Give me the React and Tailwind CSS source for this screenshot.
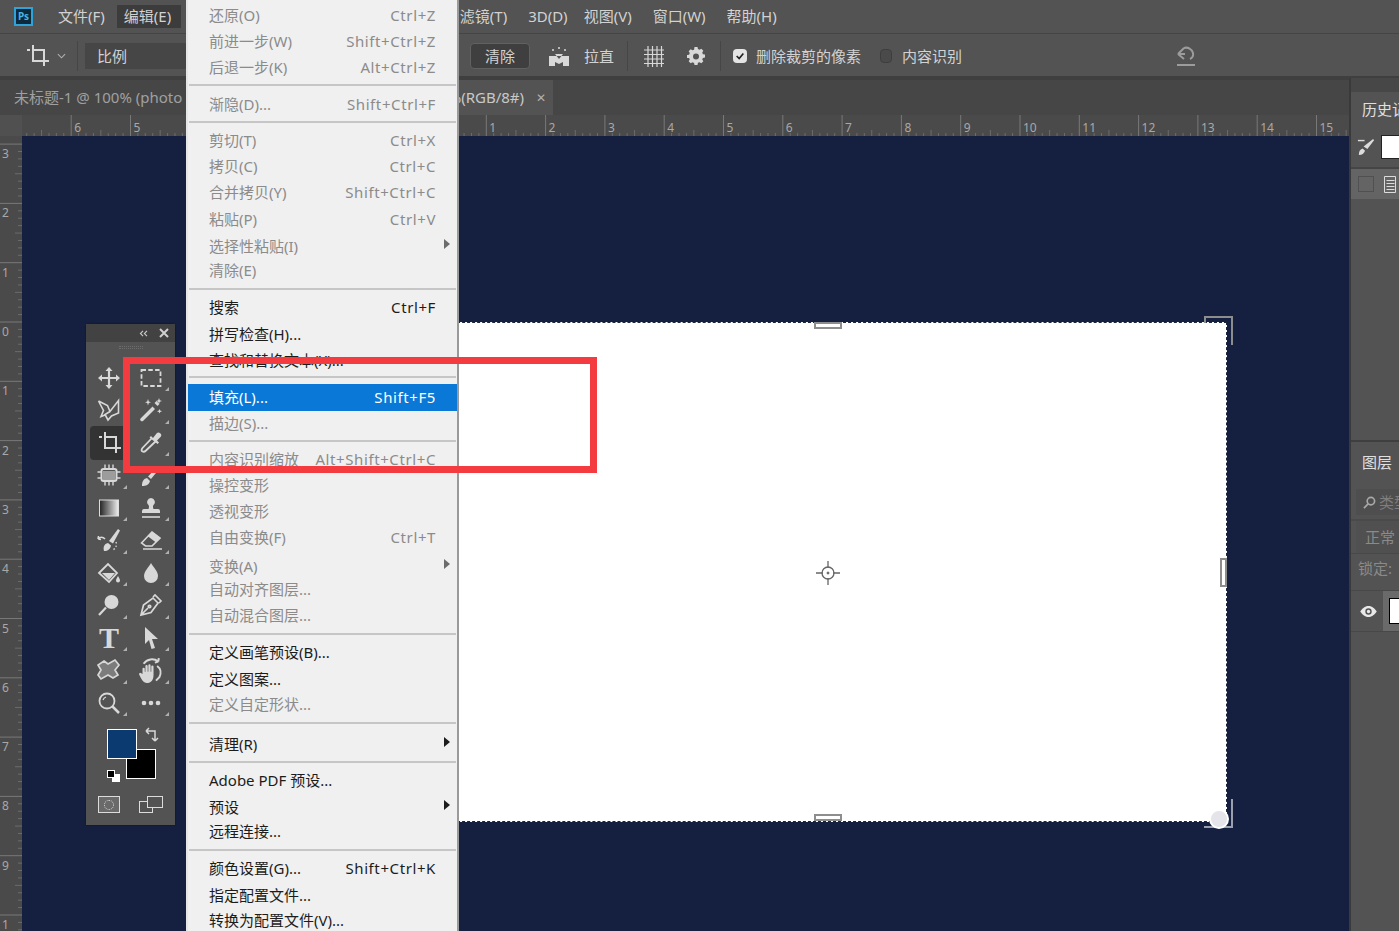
import React from 'react';

// Edit menu rows, top to bottom. Heights are set per row since the picture's spacing is uneven
const menu = [
  { label: '还原(O)', key: 'Ctrl+Z', h: 'h-[26px]', off: true },
  { label: '前进一步(W)', key: 'Shift+Ctrl+Z', h: 'h-[26px]', off: true },
  { label: '后退一步(K)', key: 'Alt+Ctrl+Z', h: 'h-[26px]', off: true },
  { sep: 'h-[10px]' },
  { label: '渐隐(D)...', key: 'Shift+Ctrl+F', h: 'h-[28px]', off: true },
  { sep: 'h-[8px]' },
  { label: '剪切(T)', key: 'Ctrl+X', h: 'h-[28px]', off: true },
  { label: '拷贝(C)', key: 'Ctrl+C', h: 'h-[25px]', off: true },
  { label: '合并拷贝(Y)', key: 'Shift+Ctrl+C', h: 'h-[26px]', off: true },
  { label: '粘贴(P)', key: 'Ctrl+V', h: 'h-[28px]', off: true },
  { label: '选择性粘贴(I)', h: 'h-[26px]', off: true, arrow: true },
  { label: '清除(E)', h: 'h-[22px]', off: true },
  { sep: 'h-[16px]' },
  { label: '搜索', key: 'Ctrl+F', h: 'h-[20px]' },
  { label: '拼写检查(H)...', h: 'h-[34px]' },
  { label: '查找和替换文本(X)...', h: 'h-[18px]' },
  { sep: 'h-[15px]' },
  { label: '填充(L)...', key: 'Shift+F5', h: 'h-[27px]', active: true },
  { label: '描边(S)...', h: 'h-[24px]', off: true },
  { sep: 'h-[12px]' },
  { label: '内容识别缩放', key: 'Alt+Shift+Ctrl+C', h: 'h-[24px]', off: true },
  { label: '操控变形', h: 'h-[28px]', off: true },
  { label: '透视变形', h: 'h-[24px]', off: true },
  { label: '自由变换(F)', key: 'Ctrl+T', h: 'h-[28px]', off: true },
  { label: '变换(A)', h: 'h-[30px]', off: true, arrow: true },
  { label: '自动对齐图层...', h: 'h-[16px]', off: true },
  { label: '自动混合图层...', h: 'h-[36px]', off: true },
  { sep: 'h-[2px]' },
  { label: '定义画笔预设(B)...', h: 'h-[34px]' },
  { label: '定义图案...', h: 'h-[20px]' },
  { label: '定义自定形状...', h: 'h-[30px]', off: true },
  { sep: 'h-[8px]' },
  { label: '清理(R)', h: 'h-[34px]', arrow: true },
  { sep: 'h-[2px]' },
  { label: 'Adobe PDF 预设...', h: 'h-[34px]' },
  { label: '预设', h: 'h-[20px]', arrow: true },
  { label: '远程连接...', h: 'h-[28px]' },
  { sep: 'h-[10px]' },
  { label: '颜色设置(G)...', key: 'Shift+Ctrl+K', h: 'h-[26px]' },
  { label: '指定配置文件...', h: 'h-[28px]' },
  { label: '转换为配置文件(V)...', h: 'h-[22px]' },
];

const Ico = ({ children, className = 'w-6 h-6' }) => (
  <svg viewBox="0 0 24 24" className={className} fill="none" stroke="#d8d8d8" strokeWidth="1.8">
    {children}
  </svg>
);

const F = { fill: '#d8d8d8', stroke: 'none' };

const tools = [
  // move
  <Ico><path {...F} d="M12 1l3.500 4h-2.400v5.900H19V8.500l4 3.500-4 3.500v-2.400h-5.900V19h2.400L12 23l-3.500-4h2.400v-5.900H5v2.400L1 12l4-3.500v2.400h5.900V5H8.500z" /></Ico>,
  // marquee
  <Ico><path strokeWidth="1.800" strokeDasharray="4.500 2.300" d="M2.500 4h19v16h-19z" /></Ico>,
  // polygonal lasso
  <Ico><path strokeWidth="1.600" d="M1.500 3l9 4.500 2.500 6 8.500-11V15l-7 3-3.500 4-3-5.500L13 13.500M1.500 3l5 9.500-2.500 6 4-1.500" /></Ico>,
  // magic wand
  <Ico><path {...F} d="M1.500 20.500l12-12 2.500 2.500-12 12a1.800 1.800 0 0 1-2.500-2.500z" /><path {...F} d="M15.500 5l2-2 3 3-2 2z" /><path {...F} d="M9 1l.8 2.400L12 4.200l-2.200.8L9 7.400 8.200 5 6 4.200l2.200-.8zM20 0l.8 2.200 2.200.8-2.200.8L20 6l-.8-2.200L17 3l2.200-.8zM20.500 11l.7 1.600 1.800.7-1.800.7-.7 1.600-.7-1.600-1.800-.7 1.800-.7z" /></Ico>,
  // crop
  <Ico><path strokeWidth="2" d="M1 6h3M7 1v16h13M7 6h11v16M20 17h3" /></Ico>,
  // eyedropper
  <Ico><path strokeWidth="1.800" d="M13 7L3.500 17c-1.500 2-1 3 0 3.500s2 .5 3.500-1L17 10" /><path {...F} d="M12 5l2 2 3.500-4.500a2.500 2.500 0 0 1 4 3.500L18 9.500l2 2-1.500 1.500L10.500 6.500z" /></Ico>,
  // artboard / patch
  <Ico><rect x="4.500" y="6" width="15" height="12" rx="2" strokeWidth="2" /><path {...F} opacity=".55" d="M6 8h12v9H6z" /><path strokeWidth="1.400" d="M8 1.500V6M12 1.500V6M16 1.500V6M8 18v4.500M12 18v4.500M16 18v4.500M0.500 9h4M0.500 15h4M19.500 9h4M19.500 15h4" /></Ico>,
  // brush
  <Ico><path {...F} d="M3 23c0-4 1-7 5-8l3 3c-1 4-4 5-8 5zM9 13.500L19 3l2 2-9 11z" /></Ico>,
  // gradient
  <svg viewBox="0 0 24 24" className="w-6 h-6"><defs><linearGradient id="gr"><stop offset="0" stopColor="#222" /><stop offset="1" stopColor="#eee" /></linearGradient></defs><rect x="2.500" y="4" width="19" height="16" fill="url(#gr)" stroke="#ddd" /></svg>,
  // stamp
  <Ico><path {...F} d="M12 2a4 4 0 0 1 2.500 7c-.8.8-.5 3 0 4H19a2 2 0 0 1 2 2v2H3v-2a2 2 0 0 1 2-2h4.500c.5-1 .8-3.200 0-4A4 4 0 0 1 12 2z" /><path strokeWidth="1.600" d="M3 21h18" /></Ico>,
  // history brush
  <Ico><path {...F} d="M7 23c-1-4 0-7 4-8l3 2.500c-.5 3.500-3 5.500-7 5.500zM12 13L21 1l2 1.500-7 13z" /><path strokeWidth="1.500" d="M1 11c2-2.500 5-2.500 7 0M1 11l.5-3M1 11l3 .5" /><path strokeWidth="1.400" strokeDasharray="1.500 2" d="M19 14c1 3 0 6-3 8" /></Ico>,
  // eraser
  <Ico><path strokeWidth="1.600" d="M2.500 15L13 4l8 6-8 8H6.500zM4 21h19" /><path {...F} d="M13 3.500l8.500 6.500-4.500 4.500-8.500-6.500z" /></Ico>,
  // paint bucket
  <Ico><path strokeWidth="1.800" d="M2 12l9-9 9 9-8 9z" /><path {...F} d="M5 12h13l-6 7zM21 15c1 2 2 3 2 4.500a2 2 0 0 1-4 0c0-1.500 1-2.500 2-4.500z" /></Ico>,
  // smudge drop
  <Ico><path {...F} d="M12 2c2 4 7 8 7 13a7 7 0 0 1-14 0c0-5 5-9 7-13z" /></Ico>,
  // dodge
  <Ico><circle {...F} cx="14.500" cy="9" r="7" /><path strokeWidth="2.200" d="M9 14.500L2 22" /></Ico>,
  // pen
  <Ico><path strokeWidth="1.700" d="M2 22l2.500-10L14 5l5 5-7 9.500zM2 22l7-7M14 4l2-2 6 6-2 2" /><circle cx="10.500" cy="13.500" r="1.200" /></Ico>,
  // type tool, a real letter
  <span className="font-['Liberation_Serif',serif] font-bold text-[30px] leading-none text-[#d8d8d8]">T</span>,
  // path select
  <Ico><path {...F} d="M6 1l13 12h-6l3 9-3.500 1-2.500-9-4 4z" /></Ico>,
  // custom shape
  <Ico><path strokeWidth="1.700" fill="#7c7c7c" d="M7 3l4 3 7-4 4 5-4 5 3 5-5 3-5-3-7 4-3-4 3-5-3-5z" /></Ico>,
  // rotate hand
  <Ico className="w-[27px] h-[27px]"><path {...F} d="M4 15V10.500a1 1 0 0 1 2 0V13h.6V8a1 1 0 0 1 2 0v5h.6V7.500a1 1 0 0 1 2 0V13h.6V8.500a1 1 0 0 1 2 0V16c0 4-2 7-5 7s-4-1-6-4L1 15.500a1 1 0 0 1 1.500-1.200z" /><path strokeWidth="1.800" d="M5 6c3-4.500 9-5 13-2M18 4l.5-3M18 4l-3 1M17 8c3 2 4 6 2 10l-3 3" /></Ico>,
  // zoom
  <Ico><circle cx="10" cy="10" r="7.500" /><path strokeWidth="2.500" d="M15.500 15.500L22 22" /><path strokeWidth="1.200" d="M6 9a4.500 4.500 0 0 1 3-3" /></Ico>,
  // more
  <Ico><circle {...F} cx="5" cy="12" r="2.300" /><circle {...F} cx="12" cy="12" r="2.300" /><circle {...F} cx="19" cy="12" r="2.300" /></Ico>,
];

const Ruler = () => {
  const marks = [];
  for (let n = -7; n <= 16; n++) marks.push(n);
  return (
    <svg className="block w-full h-full" viewBox="0 0 1327 21" preserveAspectRatio="xMinYMin meet">
      {marks.map((n) => {
        const x = 405 + n * 59.3;
        const hidden = x > 150 && x < 437; // under the open menu
        return (
          <g key={n}>
            <line x1={x} x2={x} y1="0" y2="21" stroke="#787878" />
            {[1, 2, 3, 4, 5, 6, 7].map((i) => (
              <line key={i} x1={x + (i * 59.3) / 8} x2={x + (i * 59.3) / 8} y1={i === 4 ? 15 : 18} y2="21" stroke="#6c6c6c" />
            ))}
            {!hidden && <text x={x + 3} y="17" fill="#a8a8a8" fontSize="12">{Math.abs(n)}</text>}
          </g>
        );
      })}
    </svg>
  );
};

const VRuler = () => {
  const marks = [-3, -2, -1, 0, 1, 2, 3, 4, 5, 6, 7, 8, 9, 10];
  return (
    <svg className="block w-[22px] h-full" viewBox="0 0 22 795">
      {marks.map((n) => {
        const y = 186 + n * 59.3;
        return (
          <g key={n}>
            <line x1="0" x2="22" y1={y} y2={y} stroke="#787878" />
            {[1, 2, 3, 4, 5, 6, 7].map((i) => (
              <line key={i} x1={i === 4 ? 15 : 18} x2="22" y1={y + (i * 59.3) / 8} y2={y + (i * 59.3) / 8} stroke="#6c6c6c" />
            ))}
            <text x="2" y={y + 14} fill="#a8a8a8" fontSize="12">{n === 10 ? 1 : Math.abs(n)}</text>
          </g>
        );
      })}
    </svg>
  );
};

const Toolbox = () => (
  <div className="absolute left-[86px] top-[324px] w-[89px] h-[501px] bg-[#535353] rounded-t-sm shadow-[0_0_2px_rgba(0,0,0,0.6)]">
    <div className="h-[18px] bg-[#424242] flex items-center justify-end gap-[11px] pr-[6px]">
      <svg viewBox="0 0 10 8" className="w-[9px] h-[7px]" fill="none" stroke="#c8c8c8" strokeWidth="1.300"><path d="M4.500 1L1.500 4l3 3M9 1L6 4l3 3" /></svg>
      <svg viewBox="0 0 10 10" className="w-[10px] h-[10px]" fill="none" stroke="#d0d0d0" strokeWidth="2"><path d="M1 1l8 8M9 1l-8 8" /></svg>
    </div>
    <div className="h-[19.500px] flex justify-center pt-[4px]">
      <div className="w-[24px] h-[3px] border-y border-dotted border-[#6c6c6c]" />
    </div>
    <div className="grid grid-cols-[42px_42px] auto-rows-[32.500px] px-[2px]">
      {tools.map((icon, i) => (
        <div key={i} className={`relative flex items-center justify-center ${i === 4 ? 'bg-[#333333] rounded-sm -my-[1px] ml-[2px]' : ''}`}>
          {icon}
          <span className="absolute right-[3px] bottom-[3px] w-0 h-0 border-l-[4px] border-l-transparent border-b-[4px] border-b-[#b0b0b0]" />
        </div>
      ))}
    </div>
    {/* colours */}
    <div className="relative h-[60px] mt-[10px]">
      <div className="absolute left-[40px] top-[20px] w-[30px] h-[30px] bg-black border border-white" />
      <div className="absolute left-[21px] top-[0px] w-[30px] h-[30px] bg-[#0a3a70] border border-white" />
      <svg viewBox="0 0 16 16" className="absolute left-[59px] top-[-2px] w-[16px] h-[16px]" fill="none" stroke="#d8d8d8" strokeWidth="1.500">
        <path d="M1 4h9v9M1 4l3-3M1 4l3 3M10 14l-3-3M10 14l3-3" />
      </svg>
      <div className="absolute left-[26px] top-[45px] w-[8px] h-[8px] bg-white" />
      <div className="absolute left-[21px] top-[41px] w-[8px] h-[8px] bg-black border border-white" />
    </div>
    <div className="flex mt-[7px]">
      <div className="w-[42px] ml-[2px] flex justify-center">
        <div className="w-[22px] h-[17px] border border-[#dcdcdc] bg-[#6a6a6a] flex items-center justify-center">
          <div className="w-[10px] h-[10px] rounded-full border border-dotted border-[#dcdcdc]" />
        </div>
      </div>
      <div className="relative w-[42px] flex justify-center">
        <div className="relative w-[24px] h-[17px]">
          <div className="absolute left-0 top-[5px] w-[14px] h-[12px] border border-[#dcdcdc]" />
          <div className="absolute right-0 top-0 w-[16px] h-[12px] border border-[#dcdcdc] bg-[#535353]" />
        </div>
      </div>
    </div>
  </div>
);

const Handle = ({ className }) => (
  <div className={`absolute bg-white border-2 border-[#8d8d8d] ${className}`} />
);

const App = () => {
  return (
    <div className="relative w-[1399px] h-[931px] overflow-hidden flex flex-col bg-[#535353] text-[15px] font-['Noto_Sans','Noto_Sans_CJK_SC',sans-serif]">
      {/* Menu bar */}
      <div className="h-[34px] flex items-center text-[#d2d2d2] border-b border-[#454545] shrink-0">
        <div className="ml-[14px] w-[19px] h-[19px] border-2 border-[#2fa3d8] bg-[#0c2a3c] flex items-center justify-center text-[10px] font-bold text-[#45b4e6]">Ps</div>
        <span className="ml-[25px]">文件(F)</span>
        <span className="ml-[12px] w-[64px] bg-[#3c3c3c] pl-[7px]">编辑(E)</span>
        <div className="ml-[279px] flex">
          <span>滤镜(T)</span>
          <span className="ml-[21px]">3D(D)</span>
          <span className="ml-[16px]">视图(V)</span>
          <span className="ml-[21px]">窗口(W)</span>
          <span className="ml-[21px]">帮助(H)</span>
        </div>
      </div>

      {/* Options bar */}
      <div className="h-[44px] pt-[2px] flex items-center text-[#d2d2d2] border-b-2 border-[#3f3f3f] shrink-0">
        <div className="ml-[25px] w-[26px] flex justify-center">
          <Ico><path strokeWidth="2" d="M1 6h3M7 1v16h13M7 6h11v16M20 17h3" /></Ico>
        </div>
        <svg viewBox="0 0 10 6" className="ml-[6px] w-[9px] h-[6px]" fill="none" stroke="#b0b0b0" strokeWidth="1.200"><path d="M1 1l4 4 4-4" /></svg>
        <div className="ml-[11px] w-px h-[30px] bg-[#464646]" />
        <div className="ml-[7px] w-[140px] h-[26px] pl-[12px] bg-[#464646] flex items-center shrink-0">比例</div>
        <div className="ml-[245px] w-[60px] h-[26px] bg-[#3f3f3f] border border-[#616161] rounded-sm flex items-center justify-center">清除</div>
        <div className="ml-[17px] w-[24px] flex justify-center">
          <svg viewBox="0 0 24 22" className="w-[24px] h-[22px]" fill="#d8d8d8">
            <path d="M2 11h20v10h-6v-4l-4 2-4-2v4H2zM8 9l4 5 4-5" />
            <circle cx="12" cy="3" r="1" /><circle cx="6" cy="5" r="1" /><circle cx="18" cy="5" r="1" />
          </svg>
        </div>
        <span className="ml-[13px]">拉直</span>
        <div className="ml-[13px] w-px h-[30px] bg-[#464646]" />
        <svg viewBox="0 0 24 24" className="ml-[14px] w-[24px] h-[24px]" fill="none" stroke="#d8d8d8" strokeWidth="1.200">
          <path d="M2 6h20M2 10.500h20M2 15h20M2 19.500h20M6 2v21M10.500 2v21M15 2v21M19.500 2v21" />
        </svg>
        <svg viewBox="0 0 24 24" className="ml-[21px] w-[18px] h-[18px]" fill="#d8d8d8">
          <path fillRule="evenodd" d="M10 0h4l.6 2.800 2 .9 2.500-1.500 2.700 2.800-1.500 2.400.9 2.100 2.800.6v3.800l-2.800.6-.9 2.100 1.500 2.400-2.700 2.700-2.500-1.500-2 .9L14 24h-4l-.6-2.800-2-.9-2.500 1.500-2.700-2.700 1.500-2.400-.9-2.100L0 14.600v-3.800l2.800-.6.900-2.100-1.500-2.400 2.700-2.800 2.500 1.500 2-.9zM12 8.500a4 4 0 1 0 0 8 4 4 0 0 0 0-8z" />
        </svg>
        <div className="ml-[15px] w-px h-[30px] bg-[#464646]" />
        <div className="ml-[12px] w-[14px] h-[14px] bg-[#e4e4e4] rounded-sm flex items-center justify-center">
          <svg viewBox="0 0 12 12" className="w-[10px] h-[10px]" fill="none" stroke="#222" strokeWidth="2"><path d="M2 6l3 3 5-6" /></svg>
        </div>
        <span className="ml-[9px]">删除裁剪的像素</span>
        <div className="ml-[19px] w-[12px] h-[14px] bg-[#4a4a4a] border border-[#3e3e3e] rounded-sm" />
        <span className="ml-[10px]">内容识别</span>
        <svg viewBox="0 0 24 24" className="ml-[212px] w-[24px] h-[24px]" fill="none" stroke="#9c9c9c" strokeWidth="2">
          <path d="M4 10h7M4 10l6-6M4 10l6 5M10 4a7 7 0 0 1 9 5c.6 3-1 5-3 6M3 21h18" />
        </svg>
      </div>

      <div className="flex-1 flex min-h-0">
        {/* Document area */}
        <div className="flex-1 flex flex-col min-w-0 pt-[2px] bg-[#3f3f3f]">
          <div className="h-[35px] flex bg-[#464646] shrink-0 text-[#a0a0a0]">
            <div className="w-[186px] pl-[14px] flex items-center overflow-hidden whitespace-nowrap">未标题-1 @ 100% (photo</div>
            <div className="w-[367px] bg-[#535353] flex items-center justify-end pr-[7px] text-[#c8c8c8] whitespace-nowrap">
              %(RGB/8#)
              <span className="ml-[12px] text-[#b0b0b0] text-[12px]">✕</span>
            </div>
          </div>
          <div className="h-[21px] flex bg-[#4a4a4a] shrink-0">
            <div className="w-[22px] bg-[#505050] shrink-0" />
            <div className="flex-1 min-w-0 overflow-hidden"><Ruler /></div>
          </div>
          <div className="flex-1 flex min-h-0">
            <div className="w-[22px] bg-[#4a4a4a] shrink-0"><VRuler /></div>
            <div className="flex-1 bg-[#152040] overflow-hidden">
              {/* Document with crop box */}
              <div className="relative ml-[405px] mt-[186px] w-[800px] h-[500px] bg-white border border-dashed border-[#1b2540]">
                <Handle className="left-[386px] -top-[1px] w-[28px] h-[7px]" />
                <Handle className="left-[386px] bottom-0 w-[28px] h-[7px]" />
                <Handle className="-right-[1px] top-[235px] w-[7px] h-[29px]" />
                <div className="absolute -right-[7px] -top-[7px] w-[29px] h-[29px] border-2 border-[#8d8d8d] border-b-0 border-l-0" />
                <div className="absolute right-[20px] -top-[7px] w-[2px] h-[7px] bg-[#8d8d8d]" />
                <div className="absolute -right-[7px] -bottom-[7px] w-[29px] h-[29px] border-2 border-[#9aa0b0] border-t-0 border-l-0" />
                <div className="absolute right-[-3px] bottom-[-8px] w-[20px] h-[20px] rounded-full bg-[#e4e4ea] border-2 border-white" />
                <svg viewBox="0 0 26 26" className="absolute left-[387px] top-[237px] w-[26px] h-[26px]" fill="none" stroke="#666">
                  <circle cx="13" cy="13" r="6" strokeWidth="1.300" />
                  <path strokeWidth="1.300" d="M13 1v7M13 18v7M1 13h7M18 13h7" />
                  <circle cx="13" cy="13" r="1" fill="#666" />
                </svg>
              </div>
            </div>
          </div>
        </div>

        {/* Right panels */}
        <div className="w-[50px] shrink-0 flex flex-col border-l-2 border-[#3a3a3a] text-[#e0e0e0] overflow-hidden whitespace-nowrap">
          <div className="h-[14px] bg-[#474747]" />
          <div className="h-[34px] pl-[11px] flex items-center">历史记录</div>
          <div className="h-[43px] flex items-center pl-[5px] gap-[6px] border-b-2 border-[#454545]">
            <svg viewBox="0 0 20 20" className="w-[19px] h-[19px] shrink-0" fill="#dcdcdc">
              <path d="M3 19c0-4 1-6 4-7l2.500 2.500c-1 3-3 4.500-6.500 4.500zM8 10L18 2l1 1.500-7 9z" /><path d="M2 3h7v1.500H2z" />
            </svg>
            <div className="w-[30px] h-[24px] bg-white shrink-0 border border-[#222]" />
          </div>
          <div className="h-[30px] bg-[#646464] flex items-center pl-[7px] gap-[10px]">
            <div className="w-[16px] h-[16px] border border-[#505050] shrink-0" />
            <svg viewBox="0 0 12 17" className="w-[12px] h-[17px] shrink-0" fill="none" stroke="#dcdcdc">
              <path d="M.5.5h11v16H.5zM2.500 4.500h8M2.500 7.500h8M2.500 10.500h8M2.500 13.500h8" />
            </svg>
          </div>
          <div className="h-[243px] border-b-2 border-[#3f3f3f]" />
          <div className="h-[40px] pl-[11px] flex items-center">图层</div>
          <div className="h-[26px] mt-[7px] flex items-center ml-[5px] pl-[7px] gap-[3px] text-[#7e7e7e] bg-[#4e4e4e]">
            <svg viewBox="0 0 14 14" className="w-[13px] h-[13px] shrink-0" fill="none" stroke="#a8a8a8" strokeWidth="1.800"><circle cx="8.500" cy="5.500" r="4" /><path d="M5.500 8.500L1 13" /></svg>
            类型
          </div>
          <div className="h-[2px] mt-[4px] bg-[#4a4a4a]" />
          <div className="h-[32px] ml-[5px] pl-[9px] flex items-center text-[#8a8a8a] bg-[#505050]">正常</div>
          <div className="h-[30px] pl-[7px] flex items-center text-[#8a8a8a] border-t border-[#484848]">锁定:</div>
          <div className="h-[42px] mt-[7px] flex items-center border-y border-[#484848]">
            <svg viewBox="0 0 18 12" className="ml-[9px] w-[17px] h-[11px] shrink-0" fill="#e8e8e8">
              <path fillRule="evenodd" d="M9 0c4 0 7 3 9 6-2 3-5 6-9 6S2 9 0 6c2-3 5-6 9-6zm0 2.500a3.500 3.500 0 1 0 0 7 3.500 3.500 0 0 0 0-7z" />
              <circle cx="9" cy="6" r="1.800" />
            </svg>
            <div className="ml-[6px] h-full w-[20px] bg-[#6a6a6a] pl-[6px] py-[7px]">
              <div className="h-full w-[20px] bg-white border border-black" />
            </div>
          </div>
        </div>
      </div>

      {/* Floating tools */}
      <Toolbox />

      {/* Open Edit menu */}
      <div className="absolute left-[186px] top-0 w-[273px] h-[931px] overflow-hidden bg-[#f0f0f0] border-x-2 border-l-[#e6e6e6] border-r-[#9a9a9a] pt-[2px] text-[15px] leading-none">
        {menu.map((m, i) =>
          m.sep ? (
            <div key={i} className={`${m.sep} flex items-center px-[1px]`}>
              <div className="w-full h-[2px] shrink-0 bg-[#c6c6c6]" />
            </div>
          ) : (
            <div
              key={i}
              className={`relative ${m.h} flex items-center justify-between pl-[21px] pr-[21px] whitespace-nowrap ${
                m.active ? 'bg-[#0a78d7] text-white' : m.off ? 'text-[#8b8b8b]' : 'text-[#1c1c1c]'
              }`}
            >
              <span>{m.label}</span>
              {m.key && <span className="tracking-[0.6px]">{m.key}</span>}
              {m.arrow && (
                <span className={`absolute right-[7px] w-0 h-0 -translate-y-[2px] border-y-[5px] border-y-transparent border-l-[6px] ${m.off ? 'border-l-[#6c6c6c]' : 'border-l-[#1c1c1c]'}`} />
              )}
            </div>
          )
        )}
      </div>

      {/* Red annotation box */}
      <div className="absolute left-[123px] top-[357px] w-[474px] h-[116px] border-[7px] border-[#f43b40]" />
    </div>
  );
};

export default App;
